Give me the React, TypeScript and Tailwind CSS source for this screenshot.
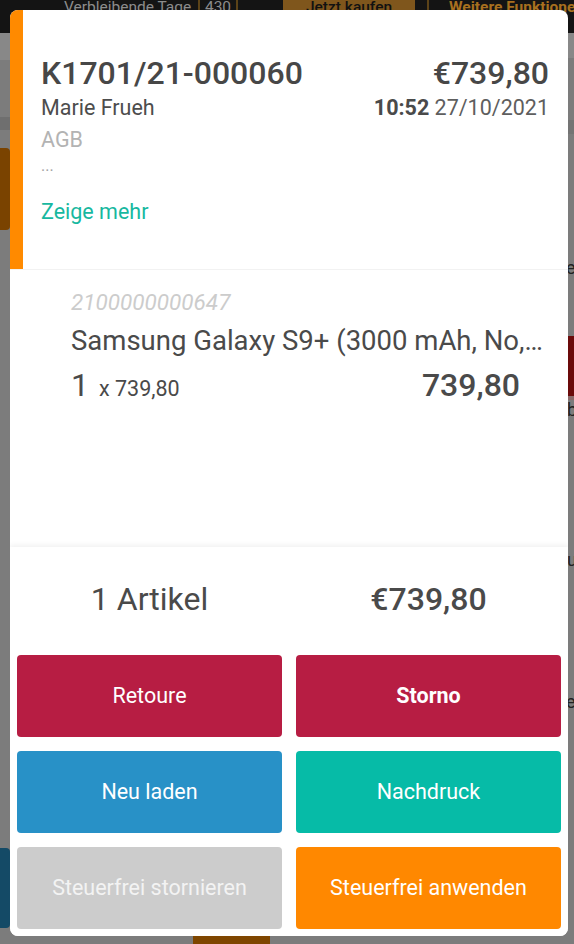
import React from "react";

export default function App() {
  return (
    <div className="relative w-[574px] h-[944px] overflow-hidden bg-[#7c7c7c] flex flex-col font-['Roboto',sans-serif]">
      {/* background top bar */}
      <div className="h-[33px] bg-[#141414] flex items-start text-[15.5px] leading-[20px] whitespace-nowrap">
        <div className="w-[64px] shrink-0" />
        <div className="-mt-[3px] w-[134px] shrink-0 text-[#8c8c8c]">Verbleibende Tage</div>
        <div className="w-[2px] h-[33px] shrink-0 bg-[#5c4318]" />
        <div className="-mt-[3px] w-[36px] shrink-0 text-center text-[#8c8c8c]">430</div>
        <div className="w-[2px] h-[33px] shrink-0 bg-[#5c4318]" />
        <div className="ml-[45px] w-[132px] h-[33px] shrink-0 bg-[#7f561c] flex justify-center">
          <span className="-mt-[3px] text-[#111] font-medium">Jetzt kaufen</span>
        </div>
        <div className="ml-[12px] w-[2px] h-[33px] shrink-0 bg-[#5c4318]" />
        <div className="-mt-[3px] ml-[20px] shrink-0 text-[#a8701f] font-bold">Weitere Funktionen</div>
      </div>

      {/* background body */}
      <div className="flex flex-1">
        <div className="w-[10px] flex flex-col">
          <div className="h-[27px] bg-[#888888]" />
          <div className="h-[57px]" />
          <div className="h-[13px] bg-[#6f6f6f]" />
          <div className="h-[18px]" />
          <div className="h-[82px] bg-[#7a4300] rounded-r-[4px]" />
          <div className="flex-1" />
          <div className="h-[80px] bg-[#144a66] rounded-r-[4px]" />
          <div className="h-[16px]" />
        </div>
        <div className="flex-1 flex flex-col justify-end">
          <div className="ml-[183px] w-[77px] h-[8px] bg-[#7f4600]" />
        </div>
        <div className="w-[6px] flex flex-col text-[18px] leading-[20px] text-[#222] overflow-hidden">
          <div className="h-[25px] bg-[#888888]" />
          <div className="h-[62px]" />
          <div className="h-[14px] bg-[#747474]" />
          <div className="h-[124px]" />
          <div className="-ml-[2px]">e</div>
          <div className="h-[58px]" />
          <div className="h-[60px] bg-[#6b0a0a]" />
          <div className="h-[4px] bg-[#8a6a6a]" />
          <div className="-ml-[1px]">b</div>
          <div className="h-[130px]" />
          <div className="-ml-[1px]">u</div>
          <div className="h-[122px]" />
          <div className="-ml-[2px]">e</div>
        </div>
      </div>

      {/* modal */}
      <div className="absolute left-[10px] top-[10px] w-[558px] h-[926px] rounded-[8px] overflow-hidden bg-white flex flex-col">
        {/* header */}
        <div className="h-[260px] flex border-b border-[#f2f2f2] shrink-0">
          <div className="w-[13px] bg-[#ff8a00]" />
          <div className="flex-1 flex justify-between pl-[18px] pr-[19px] pt-[44px]">
            <div className="flex flex-col">
              <div className="text-[32px] leading-[38px] font-medium text-[#474747]">K1701/21-000060</div>
              <div className="text-[21.5px] leading-[32px] text-[#4d4d4d]">Marie Frueh</div>
              <div className="text-[21.5px] leading-[32px] text-[#b3b3b3]">AGB</div>
              <div className="text-[16px] leading-[20px] text-[#a3a3a3]">...</div>
              <div className="mt-[20px] text-[21.5px] leading-[32px] text-[#17b8a0]">Zeige mehr</div>
            </div>
            <div className="flex flex-col items-end">
              <div className="text-[32px] leading-[38px] font-medium text-[#474747]">€739,80</div>
              <div className="text-[21.5px] leading-[32px] text-[#5e5e5e]">
                <span className="font-bold text-[#4a4a4a]">10:52</span> 27/10/2021
              </div>
            </div>
          </div>
        </div>

        {/* item */}
        <div className="flex-1 pl-[61px] pr-[23px] pt-[18px]">
          <div className="text-[22.5px] leading-[28px] italic text-[#cccccc]">2100000000647</div>
          <div className="mt-[8px] text-[27.5px] leading-[34px] text-[#4a4a4a] whitespace-nowrap overflow-hidden text-ellipsis">
            Samsung Galaxy S9+ (3000 mAh, No, Schwarz, 64 GB)
          </div>
          <div className="mt-[8px] flex items-baseline justify-between pr-[25px] leading-[38px] text-[#4a4a4a]">
            <div className="flex items-baseline">
              <span className="text-[32px]">1</span>
              <span className="ml-[10px] text-[21.5px]">x 739,80</span>
            </div>
            <span className="text-[32px] font-medium">739,80</span>
          </div>
        </div>

        {/* footer */}
        <div className="shrink-0 px-[7px] pb-[7px] bg-white shadow-[0_-2px_5px_rgba(0,0,0,0.06)]">
          <div className="grid grid-cols-2 gap-[14px] pt-[33px] text-[32px] leading-[38px] text-[#4a4a4a]">
            <div className="text-center">1 Artikel</div>
            <div className="text-center font-medium">€739,80</div>
          </div>
          <div className="mt-[37px] grid grid-cols-2 gap-[14px] text-[21.5px] text-white">
            <div className="h-[82px] rounded-[4px] bg-[#b71d43] flex items-center justify-center">Retoure</div>
            <div className="h-[82px] rounded-[4px] bg-[#b71d43] flex items-center justify-center font-bold">Storno</div>
            <div className="h-[82px] rounded-[4px] bg-[#2891c7] flex items-center justify-center">Neu laden</div>
            <div className="h-[82px] rounded-[4px] bg-[#06bba7] flex items-center justify-center">Nachdruck</div>
            <div className="h-[82px] rounded-[4px] bg-[#cccccc] flex items-center justify-center text-[#f3f3f3]">Steuerfrei stornieren</div>
            <div className="h-[82px] rounded-[4px] bg-[#ff8800] flex items-center justify-center">Steuerfrei anwenden</div>
          </div>
        </div>
      </div>
    </div>
  );
}
